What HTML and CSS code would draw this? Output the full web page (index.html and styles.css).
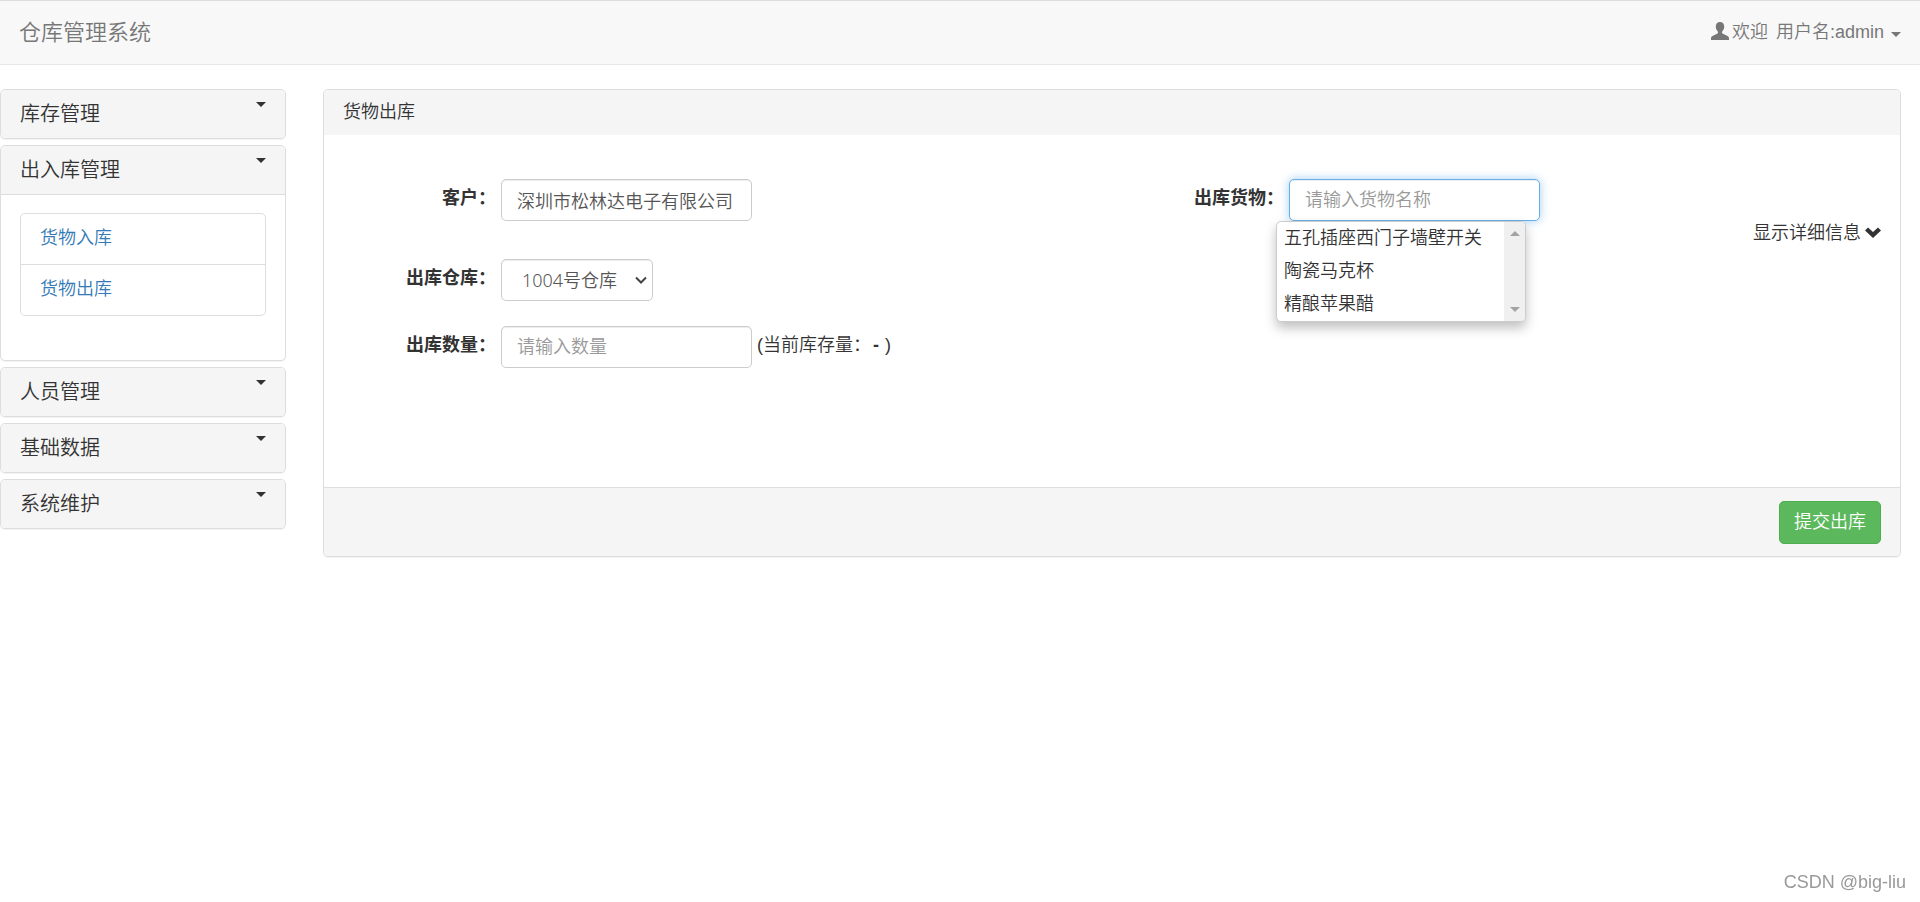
FILE: index.html
```html
<!DOCTYPE html>
<html lang="zh-CN">
<head>
<meta charset="utf-8">
<meta name="viewport" content="width=device-width, initial-scale=1">
<title>仓库管理系统</title>
<link rel="stylesheet" href="styles.css">
</head>
<body>
<header class="navbar">
  <a class="brand" href="#">仓库管理系统</a>
  <button class="user-menu" type="button">
    <svg class="user-icon" viewBox="0 0 18 18" aria-hidden="true"><path d="M9 0C6.300 0 4.800 1.900 4.800 4.600C4.800 6.500 5.500 8.200 6.600 9.300C7.100 9.800 7.200 11.200 6.500 11.600L1.500 13.900C.4 14.500 0 15.200 0 16.300V18H18V16.300C18 15.200 17.600 14.500 16.500 13.900L11.500 11.600C10.800 11.200 10.900 9.800 11.400 9.300C12.500 8.200 13.200 6.500 13.200 4.600C13.200 1.900 11.700 0 9 0Z"/></svg>
    <span>欢迎</span>
    <span class="user-name">用户名:admin</span>
    <span class="caret"></span>
  </button>
</header>

<div class="layout">
  <nav class="sidebar">
    <section class="panel">
      <button class="menu-heading" type="button">库存管理<span class="caret"></span></button>
    </section>
    <section class="panel">
      <button class="menu-heading" type="button" aria-expanded="true">出入库管理<span class="caret"></span></button>
      <div class="menu-body">
        <ul class="link-list">
          <li><a href="#">货物入库</a></li>
          <li><a href="#">货物出库</a></li>
        </ul>
      </div>
    </section>
    <section class="panel">
      <button class="menu-heading" type="button">人员管理<span class="caret"></span></button>
    </section>
    <section class="panel">
      <button class="menu-heading" type="button">基础数据<span class="caret"></span></button>
    </section>
    <section class="panel">
      <button class="menu-heading" type="button">系统维护<span class="caret"></span></button>
    </section>
  </nav>

  <main>
    <form class="panel">
      <h1 class="panel-heading">货物出库</h1>
      <div class="panel-body">
        <div class="form-column">
          <div class="field field-spaced">
            <label for="customer">客户：</label>
            <input class="control" id="customer" type="text" value="深圳市松林达电子有限公司">
          </div>
          <div class="field">
            <label for="warehouse">出库仓库：</label>
            <span class="select-wrap">
              <select class="control" id="warehouse"><option>1004号仓库</option></select>
              <svg class="select-arrow" viewBox="0 0 12 8" aria-hidden="true"><path d="M1 1.500L6 6.500L11 1.500"/></svg>
            </span>
          </div>
          <div class="field">
            <label for="amount">出库数量：</label>
            <input class="control" id="amount" type="text" placeholder="请输入数量">
            <span class="stock"><span>(当前库存量：</span><span class="stock-value">-</span><span>)</span></span>
          </div>
        </div>
        <div class="form-column">
          <div class="field">
            <label for="goods">出库货物：</label>
            <div class="autocomplete">
              <input class="control control-active" id="goods" type="text" placeholder="请输入货物名称">
              <div class="suggestions">
                <ul role="listbox" aria-label="出库货物">
                  <li role="option">五孔插座西门子墙壁开关</li>
                  <li role="option">陶瓷马克杯</li>
                  <li role="option">精酿苹果醋</li>
                </ul>
                <div class="scroll-track" aria-hidden="true">
                  <span class="scroll-up"></span>
                  <span class="scroll-down"></span>
                </div>
              </div>
            </div>
          </div>
          <button class="details" type="button">显示详细信息
            <svg class="chevron" viewBox="0 0 16 11" aria-hidden="true"><path d="M0 3.500L3 .5L8 5L13 .5L16 3.500L8 11Z"/></svg>
          </button>
        </div>
      </div>
      <footer class="panel-footer">
        <button class="submit" type="submit">提交出库</button>
      </footer>
    </form>
  </main>
</div>
<div class="watermark">CSDN @big-liu</div>
</body>
</html>
```
FILE: styles.css
```css
* { box-sizing: border-box; }

body {
  margin: 0;
  min-height: 100vh;
  background: #fff;
  color: #333;
  font-family: "Liberation Sans", "Noto Sans CJK SC", sans-serif;
  font-size: 18px;
  font-weight: 350;
  line-height: 25px;
}

button, input, select {
  margin: 0;
  font: inherit;
  color: inherit;
}

button {
  padding: 0;
  border: 0;
  background: none;
  cursor: pointer;
}

ul { margin: 0; padding: 0; list-style: none; }
a { color: #337ab7; text-decoration: none; }

.navbar {
  display: flex;
  align-items: center;
  justify-content: space-between;
  height: 65px;
  padding: 0 19px;
  border-top: 1px solid #ddd;
  border-bottom: 1px solid #e7e7e7;
  background: #f8f8f8;
  color: #777;
}

.brand { color: #777; font-size: 22px; }

.user-menu { display: flex; align-items: center; gap: 3px; }
.user-icon { width: 18px; height: 18px; margin-bottom: 4px; fill: #777; }
.user-name { margin-left: 5px; }

.caret {
  border-top: 5px solid currentColor;
  border-right: 5px solid transparent;
  border-left: 5px solid transparent;
}

.user-menu .caret { margin-top: 4px; margin-left: 4px; }

.layout {
  display: grid;
  grid-template-columns: 29fr 160fr;
  gap: 37px;
  align-items: start;
  padding: 24px 19px 24px 0;
}

.sidebar { display: flex; flex-direction: column; gap: 6px; }

.panel {
  overflow: hidden;
  border: 1px solid #ddd;
  border-radius: 5px;
  background: #fff;
  box-shadow: 0 1px 1px rgba(0, 0, 0, .05);
}

.menu-heading {
  display: flex;
  justify-content: space-between;
  width: 100%;
  padding: 12px 19px;
  background: #f5f5f5;
  font-size: 20px;
  line-height: 24px;
}

.menu-body {
  padding: 18px 19px 44px;
  border-top: 1px solid #ddd;
}

.link-list { border: 1px solid #ddd; border-radius: 5px; }
.link-list a { display: block; padding: 12px 19px 13px; }
.link-list li + li { border-top: 1px solid #ddd; }

main .panel { overflow: visible; }

.panel-heading {
  margin: 0;
  padding: 10px 19px;
  border-radius: 4px 4px 0 0;
  background: #f5f5f5;
  font-size: 18px;
  font-weight: 350;
}

.panel-body {
  display: grid;
  grid-template-columns: 1fr 1fr;
  padding: 44px 0 119px;
}

.form-column { display: flex; flex-direction: column; gap: 25px; }
.form-column:last-child { gap: 0; }

.field { display: flex; gap: 5px; }
.field-spaced { margin-bottom: 13px; }

.field label {
  flex: 0 0 172px;
  padding-top: 7px;
  font-weight: 700;
  text-align: right;
}

.control {
  width: 251px;
  height: 42px;
  padding: 0 15px;
  border: 1px solid #ccc;
  border-radius: 5px;
  outline: 0;
  background: #fff;
  color: #555;
  box-shadow: inset 0 1px 1px rgba(0, 0, 0, .075);
}

.control::placeholder { color: #999; opacity: 1; }

.control-active {
  border-color: #66afe9;
  box-shadow: inset 0 1px 1px rgba(0, 0, 0, .075), 0 0 10px rgba(102, 175, 233, .6);
}

.select-wrap { display: grid; align-items: center; }
.select-wrap > * { grid-area: 1 / 1; }

.select-wrap .control {
  width: 152px;
  padding: 0 20px;
  appearance: none;
  font-family: "Noto Sans", "Noto Sans CJK SC", sans-serif;
}

.select-arrow {
  width: 12px;
  height: 8px;
  margin-right: 6px;
  justify-self: end;
  fill: none;
  stroke: #444;
  stroke-width: 2;
  pointer-events: none;
}

.stock { display: flex; padding-top: 7px; }
.stock-value { margin: 0 6px 0 2px; font-weight: 700; }

.autocomplete { position: relative; }

.suggestions {
  position: absolute;
  top: 42px;
  right: 14px;
  z-index: 1;
  display: flex;
  width: 250px;
  overflow: hidden;
  border: 1px solid #ccc;
  border-radius: 5px;
  background: #fff;
  box-shadow: 0 6px 12px rgba(0, 0, 0, .25);
}

.suggestions ul { flex: 1; padding-left: 7px; white-space: nowrap; }
.suggestions li { height: 33px; line-height: 32px; }

.scroll-track {
  display: flex;
  flex-direction: column;
  align-items: center;
  justify-content: space-between;
  width: 21px;
  padding: 9px 0;
  background: #f0f0f0;
}

.scroll-up, .scroll-down {
  border-right: 5px solid transparent;
  border-left: 5px solid transparent;
}

.scroll-up { border-bottom: 5px solid #a3a3a3; }
.scroll-down { border-top: 5px solid #a3a3a3; }

.details {
  display: flex;
  align-items: center;
  align-self: flex-end;
  gap: 4px;
  margin-right: 19px;
}

.chevron { width: 16px; height: 11px; margin-bottom: 3px; fill: #333; }

.panel-footer {
  display: flex;
  justify-content: flex-end;
  padding: 13px 19px 12px;
  border-top: 1px solid #ddd;
  border-radius: 0 0 4px 4px;
  background: #f5f5f5;
}

.submit {
  padding: 8px 14px;
  border: 1px solid #4cae4c;
  border-radius: 5px;
  background: #5cb85c;
  color: #fff;
}

.watermark {
  position: fixed;
  right: 14px;
  bottom: 7px;
  color: #999;
}
```
